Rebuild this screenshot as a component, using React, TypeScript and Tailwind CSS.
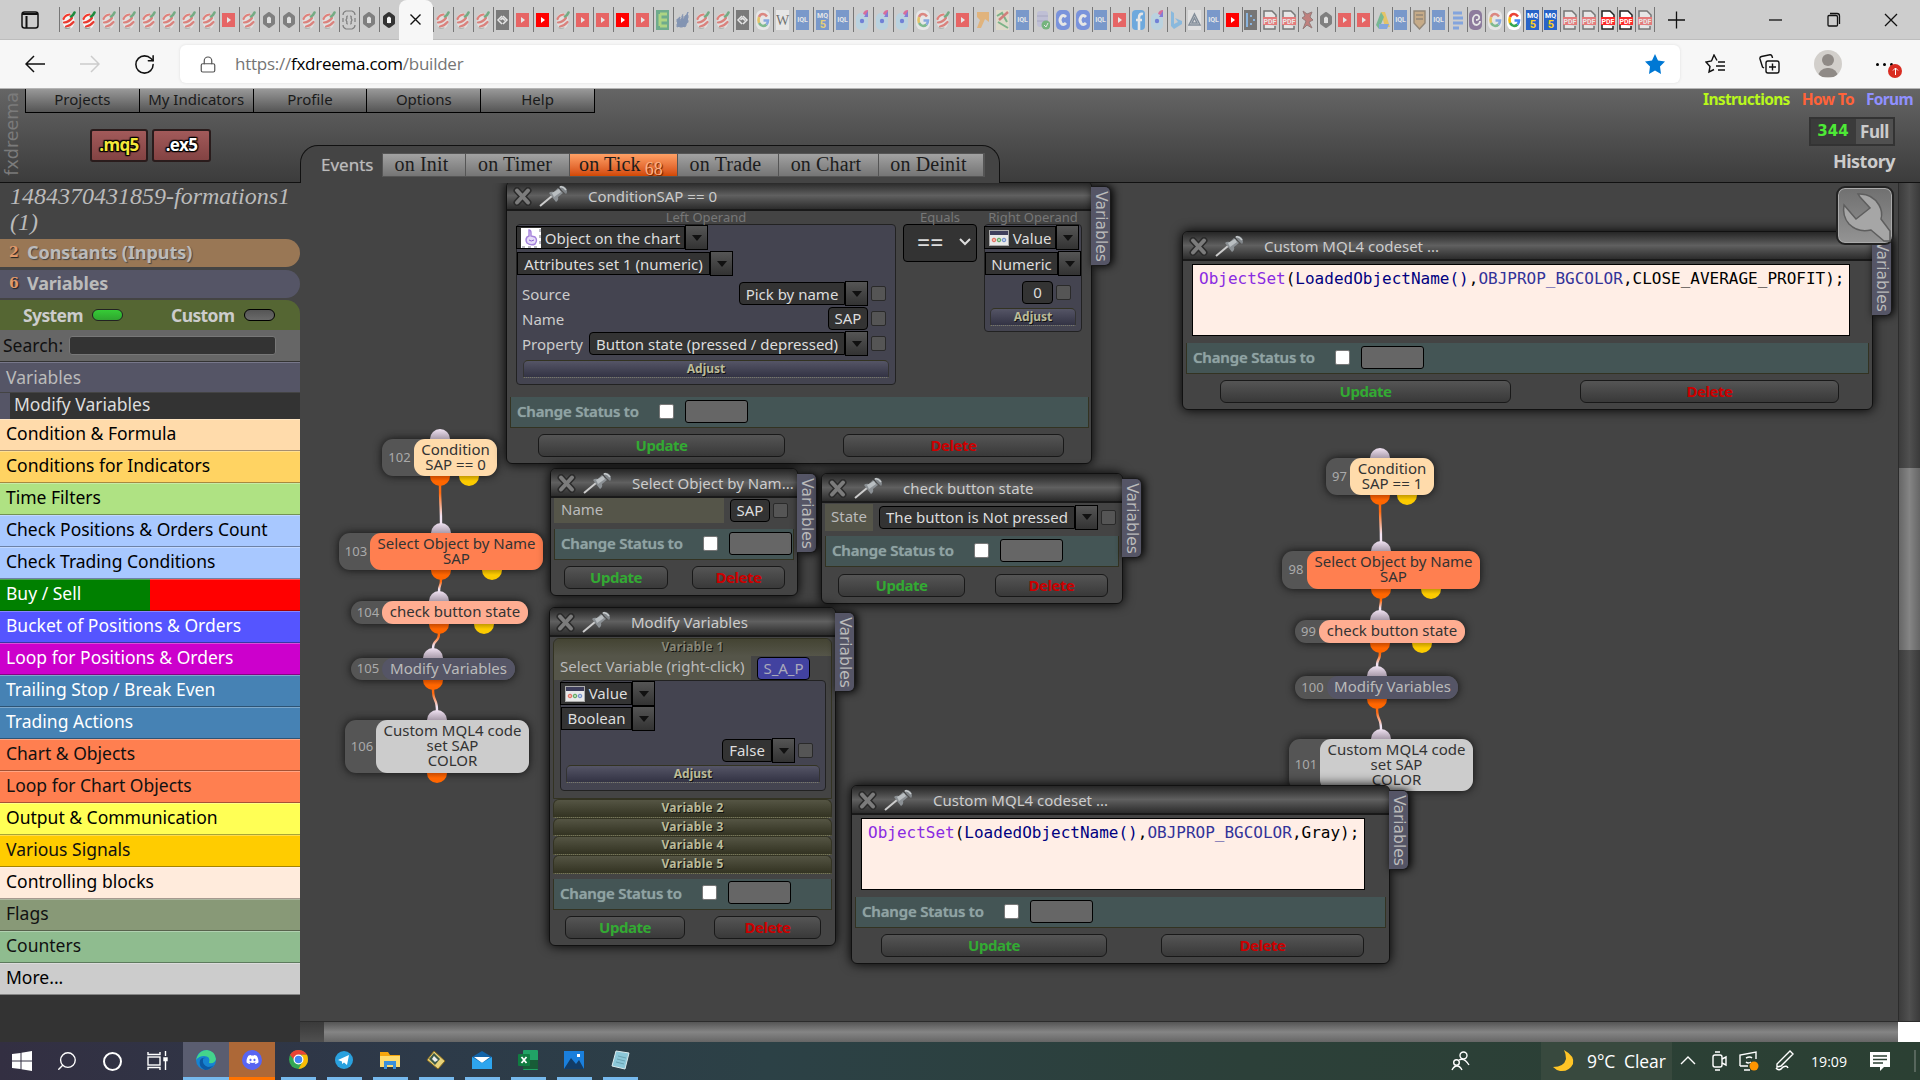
import type { ReactNode } from "react";
import clsx from "clsx";
import { Lock, RotateCw, Search } from "lucide-react";
import { FaDiscord } from "react-icons/fa";

type TabIcon = { kind: string; on?: boolean };

function parseTabs(list: string): TabIcon[] {
  return list.split(" ").map((item) => ({ kind: item.replace("!", ""), on: item.endsWith("!") }));
}

const tabsBefore = parseTabs("fx! fx! fx fx fx fx fx fx yt fx hex hex fx fx brace hex hex!");
const tabsAfter = parseTabs(
  "fx fx fx code yt yt! fx yt yt yt! yt e wave fx fx code g w mql mq5 mql dots dots dots g fx yt arrow map mql db c",
);
const tabsNarrow = parseTabs(
  "c mql yt fb dots bing tri mql yt! chart pdf pdf devil hex yt yt drive mql shield mql doc swirl g g! mq5! mq5! pdf pdf pdf! pdf! pdf",
);

const categories = [
  { label: "Condition & Formula", style: "bg-[#ffdbab] text-black" },
  { label: "Conditions for Indicators", style: "bg-[#ffd362] text-black" },
  { label: "Time Filters", style: "bg-[#afe283] text-black" },
  { label: "Check Positions & Orders Count", style: "bg-[#a8c8ff] text-black" },
  { label: "Check Trading Conditions", style: "bg-[#a8c8ff] text-black" },
  { label: "Buy / Sell", style: "bg-[linear-gradient(90deg,#008000_50%,#ff0000_50%)] text-white" },
  { label: "Bucket of Positions & Orders", style: "bg-[#5555ff] text-white" },
  { label: "Loop for Positions & Orders", style: "bg-[#cc00cc] text-white" },
  { label: "Trailing Stop / Break Even", style: "bg-[#4682b4] text-white" },
  { label: "Trading Actions", style: "bg-[#4682b4] text-white" },
  { label: "Chart & Objects", style: "bg-[#ff7f50] text-[#111]" },
  { label: "Loop for Chart Objects", style: "bg-[#ff7f50] text-[#111]" },
  { label: "Output & Communication", style: "bg-[#ffff55] text-black" },
  { label: "Various Signals", style: "bg-[#ffcc00] text-[#111]" },
  { label: "Controlling blocks", style: "bg-[#ffebdc] text-black" },
  { label: "Flags", style: "bg-[#889977] text-[#111]" },
  { label: "Counters", style: "bg-[#8fbc8f] text-[#111]" },
  { label: "More...", style: "bg-[#cccccc] text-black" },
];

function Favicon({ kind }: { kind: string }) {
  switch (kind) {
    case "fx":
      return (
        <>
          <ellipse cx="6.500" cy="11" rx="6" ry="8" fill="#f7f3f1" />
          <g fill="none" strokeLinecap="round" strokeWidth="2.2">
            <path d="M1.500 9Q3 5 7.500 4.500" stroke="#f2382c" />
            <path d="M2 12.500Q7 12 10 8" stroke="#e8392f" />
            <path d="M4 16.500Q8 16 11.500 12" stroke="#e8392f" />
            <path d="M9 6.500Q11.500 5 12.500 2.500" stroke="#1e8a3c" strokeWidth="2.600" />
            <path d="M3 18Q5 19 8 18" stroke="#7d8a80" strokeWidth="1" />
          </g>
        </>
      );
    case "yt":
      return (
        <>
          <rect y="3" width="13" height="14" fill="#f00" />
          <path d="M5 7 L9 10 L5 13Z" fill="#fff" />
        </>
      );
    case "hex":
      return <path d="M7 4 L11 7 V13 L7 16 L3 13 V7Z" fill="#f4f4f4" stroke="#333" strokeWidth="4" strokeLinejoin="round" />;
    case "brace":
      return (
        <g fill="none" stroke="#333" strokeWidth="1.2">
          <path d="M1 5 Q1 2 4 1 H10 Q13 2 13 5 M1 15 Q1 18 4 19 H10 Q13 18 13 15 M1 8V12M13 8V12" />
          <path d="M6 6 Q4 6 5 8 L4 10 L5 12 Q4 14 6 14 M8 6 Q10 6 9 8 L10 10 L9 12 Q10 14 8 14" />
        </g>
      );
    case "code":
      return (
        <>
          <rect width="13" height="20" fill="#2a2a2a" />
          <path d="M6 6 L2 10 L6 14 M7 6 L11 10 L7 14 M4.500 10 L6.500 8 L9 10.500" fill="none" stroke="#fff" strokeWidth="1.500" />
        </>
      );
    case "e":
      return (
        <>
          <rect width="13" height="20" fill="#138a4f" />
          <path d="M4 4H11M4 10H11M4 16H11M4 4V16" stroke="#8fdc3c" strokeWidth="3" fill="none" />
        </>
      );
    case "wave":
      return <path d="M1 17V9L4 7V11L7 4V9L12 2V12L9 17Z" fill="#3c5c99" stroke="#45639a" strokeDasharray="3 2" />;
    case "mql":
    case "mq5":
      return (
        <>
          <rect width="13" height="20" fill="#2864c8" />
          <text x="6.5" y={kind === "mql" ? 12 : 8} textAnchor="middle" fontSize="7" fontWeight="700" fill="#fff" fontFamily="Roboto">
            {kind === "mql" ? "IQL" : "MQ"}
          </text>
          {kind === "mq5" && (
            <text x="7" y="18" textAnchor="middle" fontSize="11" fontWeight="700" fill="#ffd21f" fontFamily="Roboto">
              5
            </text>
          )}
        </>
      );
    case "g":
      return (
        <>
          <rect width="14" height="20" rx="6" fill="#fff" />
          <g fill="none" strokeWidth="2.6">
            <path d="M11 6.5 Q9 4 7 4 Q4 4 3 7" stroke="#ea4335" />
            <path d="M3 7 Q2 10 3 13" stroke="#fbbc05" />
            <path d="M3 13 Q5 16 7 16 Q9 16 10.5 14.5" stroke="#34a853" />
            <path d="M10.5 14.5 Q12 13 12 10.5 H7.5" stroke="#4285f4" />
          </g>
        </>
      );
    case "w":
      return (
        <>
          <rect width="13" height="20" fill="#fff" />
          <text x="6.5" y="15" textAnchor="middle" fontSize="14" fill="#111" fontFamily="Liberation Serif">
            W
          </text>
        </>
      );
    case "dots":
      return (
        <>
          <rect y="3" width="12" height="17" rx="5" fill="#a9d8f2" />
          <path d="M7 4 Q8 0 12 0 V6Z" fill="#e3106a" />
          <path d="M12 1 V7 L8 7Z" fill="#3c2ee0" />
          <circle cx="6" cy="11" r="2.2" fill="#1838e0" />
        </>
      );
    case "arrow":
      return <path d="M1 2 H13 V12 L9 9 L5 18 H1 L4 10 L1 7Z" fill="#f39a2d" />;
    case "map":
      return (
        <>
          <rect width="13" height="20" fill="#efe7c8" />
          <path d="M1 6 L6 3 L11 12 M2 12 L12 18" stroke="#2c9a45" strokeWidth="2" fill="none" />
          <path d="M12 2 L3 10" stroke="#d3362c" strokeWidth="2.5" />
        </>
      );
    case "db":
      return (
        <>
          <rect x="1" y="1" width="11" height="16" rx="3" fill="#b3b3dd" />
          <path d="M1 6H12M1 11H12" stroke="#8080b5" />
          <circle cx="10" cy="15" r="4.5" fill="#1f9d2f" />
          <path d="M8 15 L10 17 L12 13" stroke="#fff" fill="none" />
        </>
      );
    case "c":
      return (
        <>
          <rect width="14" height="20" rx="5" fill="#2a5bea" />
          <path d="M10 7 Q7 4 5 7 Q3 10 5 13 Q7 16 10 13" stroke="#fff" strokeWidth="3" fill="none" />
        </>
      );
    case "fb":
      return (
        <>
          <rect width="13" height="20" rx="4" fill="#1186ee" />
          <path d="M11 4 Q7 3 7 8 V20 M4 10 H10" stroke="#fff" strokeWidth="2.6" fill="none" />
        </>
      );
    case "bing":
      return <path d="M2 1 L5 3 V14 L9 12 L6 8 L13 11 V14 L5 19 L2 16Z" fill="#4aa7ee" />;
    case "tri":
      return (
        <>
          <rect width="13" height="20" fill="#f2f2f2" />
          <path d="M6.5 4 L12 15 H1Z M6.5 8 L9 13 H4Z" fill="none" stroke="#3b5068" strokeWidth="1.5" />
        </>
      );
    case "chart":
      return (
        <>
          <rect width="13" height="20" fill="#222" />
          <path d="M3 3V17M6 6H8M9 10H11M6 14H8" stroke="#4a9cf0" strokeWidth="2" />
        </>
      );
    case "pdf":
      return (
        <>
          <path d="M1 7V1H9L13 5V7M1 14V19H12V16" stroke="#222" fill="#fff" strokeWidth="1.5" />
          <rect y="7" width="14" height="8" fill="#fb2b2b" />
          <text x="7" y="14" textAnchor="middle" fontSize="7" fontWeight="700" fill="#fff" fontFamily="Roboto">
            PDF
          </text>
        </>
      );
    case "devil":
      return <path d="M2 1 L6 4 L11 2 L9 7 L12 10 L8 12 L11 18 L6 15 L2 19 L5 11 L1 8 L4 6Z" fill="#b7352f" stroke="#5c2d2a" />;
    case "drive":
      return (
        <>
          <path d="M5 2H9L14 17H9Z" fill="#fbbc05" />
          <path d="M5 2L0 15L3 19L8 7Z" fill="#25a55a" />
          <path d="M3 14H13L11 19H3Z" fill="#3f80ee" />
        </>
      );
    case "shield":
      return <path d="M1 1H12V13L6.5 19L1 13Z M3 5H10M3 9H10" fill="#c08a45" stroke="#5b4425" strokeWidth="1.4" />;
    case "doc":
      return <path d="M2 3H11M2 8H12M2 13H12M2 18H8" stroke="#3b7ded" strokeWidth="3" />;
    default:
      return (
        <>
          <rect width="13" height="20" rx="5" fill="#4e2c6e" />
          <path d="M10 6 Q6 3 4 8 Q3 15 8 15 Q11 14 11 11 M10 6 Q11 10 7 10" stroke="#fff" strokeWidth="1.8" fill="none" />
        </>
      );
  }
}

function TabStrip({ tabs, cell }: { tabs: TabIcon[]; cell: string }) {
  return (
    <div className="flex h-[25px]">
      {tabs.map((tab, i) => (
        <div key={i} className={clsx("flex shrink-0 items-center justify-center border-l border-[#777]", cell)}>
          <svg width="14" height="20" viewBox="0 0 14 20" className={tab.on ? "" : "opacity-50"}>
            <Favicon kind={tab.kind} />
          </svg>
        </div>
      ))}
    </div>
  );
}

function BrowserBar() {
  return (
    <div className="h-[89px] bg-[#f7f7f7] font-['Open_Sans',sans-serif]">
      <div className="flex h-10 items-center border-b border-[#bdbdbd] bg-[#cdcdcd]">
        <div className="flex w-[59px] justify-center pl-[1px]">
          <svg width="18" height="18" viewBox="0 0 18 18" fill="none" stroke="#111" strokeWidth="1.5">
            <rect x="1" y="1" width="16" height="16" rx="2.5" />
            <path d="M1 3H17M5.5 5V17" strokeWidth="2" />
          </svg>
        </div>
        <TabStrip tabs={tabsBefore} cell="w-5" />
        <div className="flex h-10 w-[34px] items-center justify-center rounded-t-lg bg-[#f7f7f7]">
          <svg width="11" height="11" viewBox="0 0 11 11" stroke="#111" strokeWidth="1.4">
            <path d="M0.5 0.5L10.5 10.5M10.5 0.5L0.5 10.5" />
          </svg>
        </div>
        <TabStrip tabs={tabsAfter} cell="w-5" />
        <TabStrip tabs={tabsNarrow} cell="w-[18.75px]" />
        <div className="flex flex-1 items-center border-[#777]">
          <span className="h-[25px] w-px bg-[#777]" />
          <svg width="265" height="20" viewBox="0 0 265 20" fill="none" stroke="#111" strokeWidth="1.3">
            <path d="M13 10H30M21.500 1.500V18.500" />
            <path d="M114 10H127" />
            <path d="M173 6.500Q173 5.500 174 5.500H181Q182.500 5.500 182.500 7V15Q182.500 16 181.500 16H174Q173 16 173 15ZM175 3.500H182Q184.500 3.500 184.500 6V14" />
            <path d="M230 4L242 16M242 4L230 16" />
          </svg>
        </div>
      </div>
      <div className="flex h-[49px] items-center border-b border-[#b5b5b5]">
        <svg width="20" height="18" viewBox="0 0 20 18" className="ml-[25px]" fill="none" stroke="#111" strokeWidth="1.5">
          <path d="M20 9H1M9 1L1 9L9 17" />
        </svg>
        <svg width="20" height="18" viewBox="0 0 20 18" className="ml-[35px]" fill="none" stroke="#ccc" strokeWidth="1.5">
          <path d="M0 9H19M11 1L19 9L11 17" />
        </svg>
        <RotateCw className="ml-[33px] h-[23px] w-[23px] text-[#111]" strokeWidth={1.6} />
        <div className="ml-[24px] flex h-[38px] w-[1500px] items-center rounded-md bg-white pl-[19px] pr-[15px] shadow-[0_0_3px_#ddd]">
          <Lock className="h-[19px] w-[18px] text-[#555]" strokeWidth={1.6} />
          <span className="ml-[18px] flex-1 text-[17px] tracking-[-0.25px] text-[#757575]">
            https://<span className="text-black">fxdreema.com</span>/builder
          </span>
          <svg width="20" height="20" viewBox="0 0 20 20" fill="#0078d4">
            <path d="M10 0L13 6.500L20 7.500L15 12.500L16 20L10 16.500L4 20L5 12.500L0 7.500L7 6.500Z" />
          </svg>
        </div>
        <svg width="20" height="20" viewBox="0 0 20 20" className="ml-[25px]" fill="none" stroke="#111" strokeWidth="1.4">
          <path d="M12 6.500L9 1L6.500 7L1 8L5 12.500L4 18L9 15.500M13 8H20M11 12H20M13 16H20" />
        </svg>
        <svg width="21" height="20" viewBox="0 0 21 20" className="ml-[34px]" fill="none" stroke="#111" strokeWidth="1.4">
          <rect x="7" y="7" width="13" height="12" rx="2" />
          <path d="M13.500 9.500V16.500M10 13H17M5 14L3.500 13L1 5Q0.500 3 2.500 2.500L11 0.800Q13 0.500 13.500 4" />
        </svg>
        <div className="ml-[34px] flex h-7 w-7 flex-col items-center overflow-hidden rounded-full bg-[#d2cfcb] pt-1">
          <span className="h-3 w-3 rounded-full bg-[#8f8a86]" />
          <span className="mt-0.5 h-[9px] w-[20px] rounded-t-full rounded-b-md bg-[#8f8a86]" />
        </div>
        <div className="relative ml-[34px] flex gap-[4px]">
          <span className="h-[3px] w-[3px] rounded-full bg-black" />
          <span className="h-[3px] w-[3px] rounded-full bg-black" />
          <span className="h-[3px] w-[3px] rounded-full bg-black" />
          <span className="absolute left-[12px] top-[1px] flex h-[14px] w-[14px] items-center justify-center rounded-full bg-[#d92c21]">
            <svg width="7" height="8" viewBox="0 0 7 8" stroke="#fff" fill="none">
              <path d="M3.500 8V1M1 3.500L3.500 1L6 3.500" />
            </svg>
          </span>
        </div>
      </div>
    </div>
  );
}

const events = [
  { label: "on Init", width: "w-[83px]" },
  { label: "on Timer", width: "w-[104px]" },
  { label: "on Tick", width: "w-[108px]", count: 68 },
  { label: "on Trade", width: "w-[101px]" },
  { label: "on Chart", width: "w-[100px]" },
  { label: "on Deinit", width: "w-[105px]" },
];

const compileButton =
  "h-[33px] rounded-[3px] border-2 border-[#2a1c1c] bg-linear-to-b from-[#a25a5a] to-[#834343] text-center text-[17px] font-bold leading-[28px] tracking-[-0.6px] [text-shadow:0_0_2px_#000,0_0_2px_#000,1px_1px_1px_#000,-1px_-1px_1px_#000,1px_-1px_1px_#000,-1px_1px_1px_#000]";

function AppHeader() {
  return (
    <header className="flex h-[94px] justify-between border-b border-[#111] bg-linear-to-b from-[#656565] to-[#3c3c3c]">
      <div className="flex">
        <div className="flex w-[25px] items-center justify-center pb-[4px]">
          <span className="rotate-180 font-['DejaVu_Sans',sans-serif] text-[17.5px] leading-none text-[#7b7b7b] [writing-mode:vertical-rl]">
            fxdreema
          </span>
        </div>
        <div className="w-[275px]">
          <nav className="flex h-[24px] w-[570px] border-b border-l border-black">
            {["Projects", "My Indicators", "Profile", "Options", "Help"].map((item) => (
              <span
                key={item}
                className="flex-1 border-r border-black bg-linear-to-b from-[#999] to-[#555] text-center text-[15px] leading-[21px] text-[#1a1a1a]"
              >
                {item}
              </span>
            ))}
          </nav>
          <div className="ml-[65px] mt-4 flex gap-1">
            <span className={clsx(compileButton, "w-[58px] text-[#f5e93a]")}>.mq5</span>
            <span className={clsx(compileButton, "w-[59px] text-white")}>.ex5</span>
          </div>
        </div>
        <div className="mt-[56px] flex h-[38px] w-[700px] items-start rounded-t-[18px] border border-b-0 border-[#111] bg-[#444] pl-[20px] pt-[7px]">
          <span className="w-[61px] text-[17px] leading-[23px] text-[#bbb] [text-shadow:0_0_1px_#888]">Events</span>
          <div className="flex h-6 border border-[#555]">
            {events.map((event) => (
              <span
                key={event.label}
                className={clsx(
                  "border-r border-[#555] pr-[5px] text-center font-['Liberation_Serif',serif] text-[20px] leading-[20px] tracking-[0.15px] text-[#1c1c1c]",
                  event.width,
                  event.count ? "bg-linear-to-b from-[#ffa064] to-[#d24800]" : "bg-linear-to-b from-[#a2a2a2] to-[#757575]",
                )}
              >
                {event.label}
                {event.count && (
                  <sub className="bottom-[-4px] ml-1 text-[18px] text-[#ffb184] [text-shadow:1px_1px_1px_#5a2000]">{event.count}</sub>
                )}
              </span>
            ))}
          </div>
        </div>
      </div>
      <div className="flex flex-col items-end font-bold">
        <div className="mr-[7px] flex gap-[12px] text-[15.5px] leading-[20px] tracking-[-0.65px]">
          <span className="text-[#b8f71c]">Instructions</span>
          <span className="text-[#ff6339]">How To</span>
          <span className="text-[#9090ff]">Forum</span>
        </div>
        <div className="mr-[25px] mt-[8px] flex h-[29px] w-[86px] items-center border-2 border-[#333] bg-[#505050]">
          <span className="flex h-full w-[45px] items-center justify-center bg-[#3b3b3b] pr-px font-['DejaVu_Sans',sans-serif] text-[15px] font-bold text-[#4dea36]">
            344
          </span>
          <span className="flex-1 text-center text-[17px] leading-[22px] tracking-[-0.4px] text-[#ccc]">Full</span>
        </div>
        <span className="mr-[25px] mt-[3px] text-[18px] leading-[24px] tracking-[-0.5px] text-[#ccc]">History</span>
      </div>
    </header>
  );
}

function Sidebar() {
  return (
    <aside className="flex w-[300px] shrink-0 flex-col bg-[#333]">
      <div className="flex flex-col bg-[#444]">
        <p className="h-[56px] pl-[10px] font-['Liberation_Serif',serif] text-[24px] italic leading-[26px] text-[#bbb]">
          1484370431859-formations1
          <br />
          (1)
        </p>
        <div className="flex h-[28px] items-center rounded-r-[14px] bg-[#997755] pb-[2px] pl-[9px] text-[18px] font-bold text-[#bbb]">
          <span className="w-[18px] font-['DejaVu_Serif',serif] text-[14px] text-[#e0996a] [text-shadow:1px_1px_1px_#222]">2</span>
          <span className="tracking-[-0.05px] [text-shadow:1px_1px_1px_#444]">Constants (Inputs)</span>
        </div>
        <div className="mt-[3px] flex h-[28px] items-center rounded-r-[14px] bg-[#555566] pb-[2px] pl-[9px] text-[18px] font-bold text-[#bbb]">
          <span className="w-[18px] font-['DejaVu_Serif',serif] text-[14px] text-[#e0996a] [text-shadow:1px_1px_1px_#222]">6</span>
          <span className="tracking-[-0.2px]">Variables</span>
        </div>
        <div className="mt-[2px] flex h-[30px] items-center rounded-tr-[14px] bg-[#556633] pl-[23px] text-[17.5px] font-bold tracking-[-0.6px] text-[#ccc]">
          <span className="w-[69px]">System</span>
          <span className="h-3 w-[31px] rounded-full border border-[#222] bg-linear-to-b from-[#36cc36] to-[#2fa52f]" />
          <span className="ml-[48px] w-[73px]">Custom</span>
          <span className="h-3 w-[31px] rounded-full border border-black bg-linear-to-b from-[#555] to-[#6a6a6a]" />
        </div>
      </div>
      <div className="flex h-[32px] items-center gap-[5px] border-b border-[#333] bg-[#666] pb-px pl-[3px] text-[17.5px] text-[#111]">
        <span className="w-[61px]">Search:</span>
        <span className="h-[19px] w-[207px] rounded-[3px] border border-[#777] bg-[#333]" />
      </div>
      <div className="h-[31px] border-b border-t border-b-[#444] border-t-[#77778a] bg-[#555566] pl-[6px] text-[17.5px] leading-[28px] text-[#bbb]">
        Variables
      </div>
      <div className="h-[26px] border-l-[10px] border-[#555566] bg-[#333] pl-[4px] text-[17.5px] leading-[22px] text-[#ddd]">
        Modify Variables
      </div>
      {categories.map((category) => (
        <div
          key={category.label}
          className={clsx(
            "h-8 border-b border-black/35 pl-[6px] text-[17.5px] leading-[28px] shadow-[inset_0_1px_0_rgba(255,255,255,0.3)]",
            category.style,
          )}
        >
          {category.label}
        </div>
      ))}
    </aside>
  );
}

type WindowProps = {
  title: string;
  place: string;
  children: ReactNode;
};

function BlockWindow({ title, place, children }: WindowProps) {
  return (
    <section className={clsx("absolute rounded-[6px] border border-[#111] bg-[#444] shadow-[0_0_12px_#000]", place)}>
      <header className="flex h-[29px] items-center rounded-t-[5px] border-b-2 border-[#191919] bg-linear-to-b from-[#262626] via-[#606060] to-[#2c2c2c] pl-[6px] pt-px">
        <svg width="19" height="19" viewBox="0 0 19 19" fill="none" strokeLinecap="round">
          <path d="M4 3.500L15 15.500M15 3.500L4 15.500" stroke="#2b2b2b" strokeWidth="7" />
          <path d="M4 3.500L15 15.500M15 3.500L4 15.500" stroke="#7c7c7c" strokeWidth="4" />
        </svg>
        <svg width="29" height="22" viewBox="0 0 29 22" className="ml-[7px]">
          <path d="M1 21L13 11" stroke="#ccc" strokeWidth="2" />
          <path d="M10 8Q12 6 15 7L19 3L24 8L19 12Q20 15 17 17Z" fill="#8b9094" />
          <path d="M13 8L20 4L22 7L15 12Z" fill="#b9bec1" />
          <path d="M20 2Q23 -1 27 3Q29 7 27 9Q24 7 20 2Z" fill="#81868a" />
          <path d="M21 2Q24 1 27 5" stroke="#c8ccce" fill="none" strokeWidth="1.5" />
        </svg>
        <h2 className="ml-[20px] flex-1 whitespace-nowrap text-[15px] leading-[20px] text-[#ccc]">{title}</h2>
      </header>
      {children}
      <span className="absolute left-full top-[4px] flex h-[80px] w-[20px] items-center justify-center rounded-r-[6px] border border-l-0 border-[#1a1a1a] bg-[#555566] font-['DejaVu_Sans',sans-serif] text-[15.5px] leading-none text-[#bbb] shadow-[2px_0_8px_#000] [writing-mode:vertical-rl]">
        Variables
      </span>
    </section>
  );
}

function StatusRow({ place }: { place: string }) {
  return (
    <div className={clsx("flex h-[31px] items-center border border-t-0 border-[#333322] bg-[#445555] pb-[2px] pl-[6px]", place)}>
      <span className="w-[142px] whitespace-nowrap text-[15px] font-semibold tracking-[-0.2px] text-[#8fa3a3] [text-shadow:0_0_1px_#7d9090]">
        Change Status to
      </span>
      <span className="h-[15px] w-[15px] shrink-0 rounded-[2px] border border-[#777] bg-white" />
      <span className="ml-[11px] h-[23px] w-[63px] shrink-0 rounded-[3px] border border-black bg-[#666]" />
    </div>
  );
}

function Buttons({ place, update, remove }: { place: string; update: string; remove: string }) {
  const base =
    "h-[23px] rounded-[6px] border-[1.5px] border-[#191919] bg-linear-to-b from-[#555] to-[#393939] text-center text-[15px] font-bold leading-[20px] tracking-[-0.5px]";
  return (
    <div className={clsx("flex", place)}>
      <span className={clsx(base, "text-[#33aa33]", update)}>Update</span>
      <span className={clsx(base, "text-[#cc0000]", remove)}>Delete</span>
    </div>
  );
}

function Select({ label, width, icon, square }: { label: string; width: string; icon?: "value" | "object"; square?: boolean }) {
  return (
    <span className={clsx("flex h-[25px] items-center", width)}>
      <span
        className={clsx(
          "flex h-[23px] flex-1 items-center justify-center gap-[4px] whitespace-nowrap border border-black bg-[#333] text-[15px] text-[#ddd]",
          !square && "rounded-l-[4px]",
        )}
      >
        {icon === "value" && (
          <svg width="20" height="16" viewBox="0 0 20 16">
            <rect x="0.500" y="0.500" width="19" height="15" fill="#e8e8e8" stroke="#aaa" />
            <rect x="1" y="1" width="18" height="4" fill="#3e3e5c" />
            <circle cx="5" cy="10" r="1.800" fill="#f4b0a4" stroke="#e06a5a" />
            <circle cx="10" cy="10" r="1.800" fill="#b4d8b4" stroke="#5aa45a" />
            <circle cx="15" cy="10" r="1.800" fill="#bccbe8" stroke="#6a8ac8" />
          </svg>
        )}
        {icon === "object" && (
          <svg width="20" height="20" viewBox="0 0 20 20">
            <rect width="20" height="20" fill="#fff" />
            <path d="M8 2Q10 2 10 5V8L14 9Q17 12 14 16Q10 18 6 15Q4 12 6 9L8 8Z" fill="#e6dcf8" stroke="#a583dc" strokeWidth="1.4" />
            <path d="M8 12Q10 14 13 12" stroke="#8a5ed0" fill="none" />
            <path d="M1 19H19M19 1V19" stroke="#778" strokeDasharray="3 3" />
          </svg>
        )}
        {label}
      </span>
      <span className="flex h-[25px] w-[23px] items-center justify-center border border-black bg-linear-to-b from-[#555] to-[#333]">
        <span className="border-x-[5px] border-t-[6px] border-x-transparent border-t-[#111]" />
      </span>
    </span>
  );
}

function Input({ value, width }: { value: string; width: string }) {
  return (
    <span className={clsx("h-[23px] rounded-[4px] border border-black bg-[#333] text-center text-[15px] leading-[20px] text-[#ddd]", width)}>
      {value}
    </span>
  );
}

function Check() {
  return <span className="ml-[3px] h-[15px] w-[15px] shrink-0 rounded-[2px] border border-[#2a2a2a] bg-[#555]" />;
}

function Adjust({ place }: { place: string }) {
  return (
    <div
      className={clsx(
        "h-[18px] rounded-t-[5px] border-x border-b border-t border-b-[#777766] border-x-[#333] border-t-[#333322] bg-linear-to-b from-[#555566] to-[#333344] text-center text-[12px] font-bold leading-[16px] text-[#bbbb99] [border-bottom-style:dotted] [text-shadow:1px_1px_0_#111]",
        place,
      )}
    >
      Adjust
    </div>
  );
}

function ConditionWindow() {
  return (
    <BlockWindow title="ConditionSAP == 0" place="left-[206px] top-[-2px] h-[283px] w-[586px]">
      <div className="flex gap-[7px] pl-[9px] text-center text-[13px] leading-[12px] text-[#777]">
        <div className="w-[380px]">
          Left Operand
          <div className="mt-px h-[161px] rounded-[4px] border border-[#222] bg-[#444450] text-left text-[15px] text-[#ccc]">
            <Select label="Object on the chart" width="-ml-px w-[192px]" icon="object" square />
            <div className="mt-px">
              <Select label="Attributes set 1 (numeric)" width="w-[216px]" square />
            </div>
            <div className="mt-[5px] flex h-[25px] items-center pl-[5px] pr-[9px]">
              <span className="flex-1">Source</span>
              <Select label="Pick by name" width="w-[129px]" />
              <Check />
            </div>
            <div className="flex h-[25px] items-center pl-[5px] pr-[9px]">
              <span className="flex-1">Name</span>
              <Input value="SAP" width="w-[40px]" />
              <Check />
            </div>
            <div className="flex h-[25px] items-center pl-[5px] pr-[9px]">
              <span className="flex-1">Property</span>
              <Select label="Button state (pressed / depressed)" width="w-[279px]" />
              <Check />
            </div>
            <Adjust place="mx-[6px] mt-[4px]" />
          </div>
        </div>
        <div className="w-[74px]">
          Equals
          <div className="mt-px flex h-[38px] items-center justify-between rounded-[4px] border border-black bg-[#333] pl-[13px] pr-[5px] pb-[2px] text-[23px] text-[#ddd]">
            ==
            <svg width="12" height="8" viewBox="0 0 12 8" fill="none" stroke="#ddd" strokeWidth="2">
              <path d="M1 1L6 6L11 1" />
            </svg>
          </div>
        </div>
        <div className="w-[98px]">
          Right Operand
          <div className="mt-px h-[108px] rounded-[4px] border border-[#222] bg-[#444450] text-[15px] text-[#ccc]">
            <Select label="Value" width="-ml-px w-[95px]" icon="value" square />
            <div className="mt-px">
              <Select label="Numeric" width="w-[96px]" square />
            </div>
            <div className="mt-[4px] flex h-[25px] items-center pl-[37px]">
              <Input value="0" width="w-[31px]" />
              <Check />
            </div>
            <Adjust place="mx-[5px] mt-[3px]" />
          </div>
        </div>
      </div>
      <StatusRow place="ml-[3px] mr-[2px] mt-[12px]" />
      <Buttons place="mt-[6px] pl-[31px]" update="w-[247px]" remove="ml-[58px] w-[221px]" />
    </BlockWindow>
  );
}

function CodeBox({ place, value }: { place: string; value: string }) {
  return (
    <div
      className={clsx(
        "h-[72px] whitespace-nowrap border border-black bg-[#ffeee6] pl-[6px] pt-[2px] font-['DejaVu_Sans_Mono',monospace] text-[16px] leading-[24px] text-[#000080]",
        place,
      )}
    >
      <span className="text-[#8a2be2]">ObjectSet</span>
      <span className="text-black">(</span>LoadedObjectName()<span className="text-black">,</span>
      <span className="text-[#333399]">OBJPROP_BGCOLOR</span>
      <span className="text-black">,{value});</span>
    </div>
  );
}

function ModifyWindow() {
  const row =
    "h-[18.7px] rounded-t-[6px] border border-b-[#777755] border-t-[#333322] border-x-[#333322] bg-linear-to-b from-[#555544] to-[#333322] text-center text-[12px] font-bold leading-[16px] tracking-[0.3px] text-[#bbbb99] [border-bottom-style:dotted] [text-shadow:1px_1px_0_#111]";
  return (
    <BlockWindow title="Modify Variables" place="left-[249px] top-[424px] h-[339px] w-[287px]">
      <div className="mx-[3px] mt-px h-[161px] rounded-t-[6px] border border-[#333322]">
        <div className="h-[17px] rounded-t-[6px] bg-linear-to-b from-[#444433] to-[#555549] text-center text-[12px] font-bold leading-[15px] tracking-[0.3px] text-[#888877] [text-shadow:1px_1px_0_#111]">
          Variable 1
        </div>
        <div className="flex h-[24px] items-center">
          <span className="h-[24px] w-[197px] bg-[#555549] pl-[6px] text-[15px] leading-[21px] text-[#bbb]">Select Variable (right-click)</span>
          <span className="ml-[6px] h-[23px] w-[53px] rounded-[4px] border border-black bg-[#4242a0] text-center text-[15px] leading-[20px] text-[#aab]">
            S_A_P
          </span>
        </div>
        <div className="ml-[6px] h-[111px] w-[266px] rounded-[4px] border border-[#222] bg-[#444450]">
          <Select label="Value" width="-ml-px w-[95px]" icon="value" square />
          <Select label="Boolean" width="w-[94px]" square />
          <div className="mt-[7px] flex items-center justify-end pr-[12px]">
            <Select label="False" width="w-[73px]" />
            <Check />
          </div>
          <Adjust place="mx-[5px] mt-[2px]" />
        </div>
      </div>
      <div className="mx-[3px]">
        {[2, 3, 4, 5].map((n) => (
          <div key={n} className={row}>
            Variable {n}
          </div>
        ))}
      </div>
      <StatusRow place="mx-[3px] mt-[5px]" />
      <Buttons place="mt-[6px] pl-[15px]" update="w-[120px]" remove="ml-[29px] w-[107px]" />
    </BlockWindow>
  );
}

type NodeProps = {
  id: number;
  lines: string[];
  place: string;
  idWidth: string;
  color: string;
  port: string;
  elsePort?: string;
};

const nodes: NodeProps[] = [
  { id: 102, lines: ["Condition", "SAP == 0"], place: "left-[82px] top-[256px] h-[37px] w-[115px]", idWidth: "w-[32px]", color: "bg-[#ffdbab] text-[#333]", port: "left-[48px]", elsePort: "left-[77px]" },
  { id: 103, lines: ["Select Object by Name", "SAP"], place: "left-[39px] top-[350px] h-[37px] w-[204px]", idWidth: "w-[31px]", color: "bg-[#ff7f50] text-[#333]", port: "left-[92px]", elsePort: "left-[143px]" },
  { id: 104, lines: ["check button state"], place: "left-[51px] top-[418px] h-[23px] w-[177px]", idWidth: "w-[31px]", color: "bg-[#ffad91] text-[#333]", port: "left-[78px]", elsePort: "left-[123px]" },
  { id: 105, lines: ["Modify Variables"], place: "left-[51px] top-[475px] h-[22px] w-[164px]", idWidth: "w-[31px]", color: "bg-[#555566] text-[#bbb]", port: "left-[72px]" },
  { id: 106, lines: ["Custom MQL4 code", "set SAP", "COLOR"], place: "left-[45px] top-[537px] h-[53px] w-[184px]", idWidth: "w-[31px]", color: "bg-[#ccc] text-[#333]", port: "left-[82px]" },
  { id: 97, lines: ["Condition", "SAP == 1"], place: "left-[1026px] top-[275px] h-[37px] w-[108px]", idWidth: "w-[24px]", color: "bg-[#ffdbab] text-[#333]", port: "left-[44px]", elsePort: "left-[71px]" },
  { id: 98, lines: ["Select Object by Name", "SAP"], place: "left-[982px] top-[368px] h-[38px] w-[198px]", idWidth: "w-[25px]", color: "bg-[#ff7f50] text-[#333]", port: "left-[89px]", elsePort: "left-[139px]" },
  { id: 99, lines: ["check button state"], place: "left-[995px] top-[437px] h-[23px] w-[170px]", idWidth: "w-[24px]", color: "bg-[#ffad91] text-[#333]", port: "left-[75px]", elsePort: "left-[117px]" },
  { id: 100, lines: ["Modify Variables"], place: "left-[995px] top-[493px] h-[23px] w-[163px]", idWidth: "w-[32px]", color: "bg-[#555566] text-[#bbb]", port: "left-[72px]" },
  { id: 101, lines: ["Custom MQL4 code", "set SAP", "COLOR"], place: "left-[989px] top-[556px] h-[52px] w-[184px]", idWidth: "w-[31px]", color: "bg-[#ccc] text-[#333]", port: "left-[82px]" },
];

function FlowNode({ id, lines, place, idWidth, color, port, elsePort }: NodeProps) {
  return (
    <div className={clsx("absolute flex items-center rounded-[11px] bg-[#555] shadow-[0_0_9px_#111]", place)}>
      <span className={clsx("absolute bottom-full h-[10px] w-[20px] rounded-t-full bg-linear-to-b from-[#f0e2f2] to-[#a99cab]", port)} />
      <span className={clsx("absolute top-full h-[10px] w-[20px] rounded-b-full bg-linear-to-b from-[#c84a00] to-[#ff6600] to-50%", port)} />
      {elsePort && (
        <span className={clsx("absolute top-full h-[10px] w-[20px] rounded-b-full bg-linear-to-b from-[#c49a00] to-[#fccb00] to-50%", elsePort)} />
      )}
      <span className={clsx("shrink-0 pl-[3px] text-center text-[13px] text-[#aaa]", idWidth)}>{id}</span>
      <span
        className={clsx(
          "flex h-full flex-1 flex-col justify-center whitespace-nowrap rounded-[11px] pb-[2px] text-center text-[15px] leading-[15px]",
          color,
        )}
      >
        {lines.map((line) => (
          <span key={line}>{line}</span>
        ))}
      </span>
    </div>
  );
}

const links = [
  [140, 302, 141, 341],
  [141, 396, 139, 409],
  [139, 450, 133, 466],
  [133, 506, 137, 528],
  [1080, 321, 1081, 359],
  [1081, 415, 1080, 428],
  [1080, 469, 1077, 484],
  [1077, 525, 1081, 547],
];

function Canvas() {
  return (
    <div className="relative h-[838px] flex-1 overflow-hidden bg-[#444]">
      <svg className="absolute inset-0" width="1598" height="838" fill="none" strokeWidth="2.4">
        {links.map(([x1, y1, x2, y2], i) => (
          <g key={i}>
            <linearGradient id={`link${i}`} gradientUnits="userSpaceOnUse" x1="0" y1={y1} x2="0" y2={y2}>
              <stop offset="0.2" stopColor="#ff6a10" />
              <stop offset="0.8" stopColor="#f0e2f2" />
            </linearGradient>
            <path d={`M${x1} ${y1}C${x1} ${(y1 + y2) / 2 + 3} ${x2} ${(y1 + y2) / 2 - 3} ${x2} ${y2}`} stroke={`url(#link${i})`} />
          </g>
        ))}
      </svg>
      {nodes.map((node) => (
        <FlowNode key={node.id} {...node} />
      ))}

      <ConditionWindow />

      <BlockWindow title="Select Object by Nam..." place="left-[250px] top-[285px] h-[128px] w-[248px]">
        <div className="flex h-[25px] items-center pl-[3px]">
          <span className="h-[25px] w-[170px] bg-[#555549] pl-[7px] text-[15px] leading-[22px] text-[#bbb]">Name</span>
          <span className="w-[6px]" />
          <Input value="SAP" width="w-[40px]" />
          <Check />
        </div>
        <StatusRow place="ml-[3px] mr-[3px] mt-[6px]" />
        <Buttons place="mt-[6px] pl-[13px]" update="w-[104px]" remove="ml-[24px] w-[93px]" />
      </BlockWindow>

      <BlockWindow title="check button state" place="left-[521px] top-[290px] h-[131px] w-[302px]">
        <div className="flex h-[28px] items-center pl-[3px]">
          <span className="h-[27px] w-[48px] bg-[#555549] pl-[6px] text-[15px] leading-[24px] text-[#bbb]">State</span>
          <span className="w-[6px]" />
          <Select label="The button is Not pressed" width="w-[219px]" />
          <Check />
        </div>
        <StatusRow place="ml-[3px] mr-[3px] mt-[5px]" />
        <Buttons place="mt-[7px] pl-[16px]" update="w-[127px]" remove="ml-[30px] w-[113px]" />
      </BlockWindow>

      <ModifyWindow />

      <BlockWindow title="Custom MQL4 codeset ..." place="left-[551px] top-[602px] h-[179px] w-[539px]">
        <CodeBox place="ml-[9px] mt-[3px] w-[504px]" value="Gray" />
        <StatusRow place="mx-[3px] mt-[7px]" />
        <Buttons place="mt-[6px] pl-[29px]" update="w-[226px]" remove="ml-[54px] w-[203px]" />
      </BlockWindow>

      <BlockWindow title="Custom MQL4 codeset ..." place="left-[882px] top-[48px] h-[179px] w-[691px]">
        <CodeBox place="ml-[9px] mt-[3px] w-[658px]" value="CLOSE_AVERAGE_PROFIT" />
        <StatusRow place="mx-[3px] mt-[7px]" />
        <Buttons place="mt-[6px] pl-[37px]" update="w-[291px]" remove="ml-[69px] w-[259px]" />
      </BlockWindow>

      <button className="absolute left-[1536px] top-[3px] h-[59px] w-[58px] rounded-[9px] border-2 border-[#222] bg-linear-to-b from-[#707070] to-[#949494] shadow-[inset_0_0_0_1px_#aaa]">
        <svg width="54" height="55" viewBox="0 0 54 55">
          <path
            d="M20 6Q34 5 41 17Q45 24 43 31L52 43V53H46L33 42Q20 45 11 36Q4 28 6 17L18 31L32 20L22 9Z"
            fill="#a6a6a6"
            stroke="#5e5e5e"
            strokeWidth="1.5"
          />
        </svg>
      </button>
    </div>
  );
}

function TaskSlot({ children, tone, line }: { children: ReactNode; tone?: string; line?: string }) {
  return (
    <span className={clsx("flex h-[38px] w-[46px] shrink-0 flex-col items-center justify-end", tone)}>
      <span className="flex flex-1 items-center">{children}</span>
      <span className={clsx("h-[3px]", line ?? "w-0")} />
    </span>
  );
}

function Taskbar() {
  const open = "w-[35px] bg-[#76b9ed]";
  return (
    <footer className="flex h-[38px] items-center bg-[linear-gradient(90deg,#332f42_0%,#2d3a49_22%,#2c4146_40%,#2c4039_65%,#2b4033_100%)] font-['Open_Sans',sans-serif] text-white">
      <span className="flex w-[44px] justify-center">
        <svg width="20" height="20" viewBox="0 0 20 20" fill="#fff">
          <path d="M0 3L8.500 2V9.500H0ZM9.500 1.800L20 0V9.500H9.500ZM0 10.500H8.500V18L0 17ZM9.500 10.500H20V20L9.500 18.200Z" />
        </svg>
      </span>
      <span className="flex w-[46px] justify-center">
        <Search className="h-[22px] w-[22px] -scale-x-100" strokeWidth={1.5} />
      </span>
      <span className="flex w-[45px] justify-center">
        <span className="h-[19px] w-[19px] rounded-full border-[2.5px] border-white" />
      </span>
      <span className="flex w-[45px] justify-center">
        <svg width="21" height="20" viewBox="0 0 21 20" fill="none" stroke="#fff" strokeWidth="1.4">
          <path d="M1 1V3.500H13V1M1 19V16.500H13V19M18.500 0V5M18.500 10V19" />
          <rect x="1" y="6" width="12" height="8" />
          <path d="M17 7H20V9.500H17Z" fill="#fff" />
        </svg>
      </span>
      <span className="w-[3px]" />
      <TaskSlot tone="bg-[#5a5d70]" line="w-full bg-[#76b9ed]">
        <svg width="20" height="20" viewBox="0 0 20 20">
          <circle cx="10" cy="10" r="10" fill="#1683d1" />
          <path d="M1 7Q4 0 11 0Q19 1 20 9Q19 14 13 13Q15 6 8 6Q3 6 0 10Z" fill="#44d48c" />
          <path d="M7 9Q6 15 12 17Q16 17 18 15Q14 20 9 20Q2 17 4 10Q6 7 10 8Q7 8 7 9Z" fill="#0c59a4" />
        </svg>
      </TaskSlot>
      <TaskSlot tone="bg-[#ad6837]" line="w-full bg-[#ff7300]">
        <span className="flex h-5 w-5 items-center justify-center rounded-full bg-[#5865f2]">
          <FaDiscord className="h-[13px] w-[13px]" />
        </span>
      </TaskSlot>
      <TaskSlot line={open}>
        <svg width="19" height="19" viewBox="0 0 20 20">
          <circle cx="10" cy="10" r="10" fill="#34a853" />
          <path d="M1 5Q4 0 10 0Q16 0 19 5H10L6 11Z" fill="#ea4335" />
          <path d="M19 5Q22 13 16 18Q13 20 10 20L15 11L13 5Z" fill="#fbbc05" />
          <circle cx="10" cy="10" r="4.600" fill="#4285f4" stroke="#fff" strokeWidth="1.300" />
        </svg>
      </TaskSlot>
      <TaskSlot line={open}>
        <svg width="18" height="18" viewBox="0 0 18 18">
          <circle cx="9" cy="9" r="9" fill="#2aa1de" />
          <path d="M3 9L14 4L12 14L9 11.500L7 13V10.500Z" fill="#fff" />
        </svg>
      </TaskSlot>
      <TaskSlot line={open}>
        <svg width="20" height="18" viewBox="0 0 20 18">
          <path d="M0 1H8L10 4H20V16H0Z" fill="#f6a50c" />
          <path d="M0 5H20V16H0Z" fill="#ffdb6e" />
          <path d="M4 18V10H16V18H13V14H7V18Z" fill="#3c8fdc" />
        </svg>
      </TaskSlot>
      <TaskSlot line={open}>
        <svg width="20" height="20" viewBox="0 0 20 20">
          <path d="M8 1L19 11L12 19L1 10Z" fill="#e8d27a" stroke="#8a6c1c" />
          <path d="M8 3L14 9L9 15L3 9Z" fill="#3d5a4a" />
          <path d="M8 6L12 10L9 12L6 9Z" fill="#eee" />
        </svg>
      </TaskSlot>
      <TaskSlot line={open}>
        <svg width="20" height="20" viewBox="0 0 20 20">
          <path d="M0 7L10 1L20 7V18H0Z" fill="#1464a8" />
          <path d="M2 7H18L10 13Z" fill="#fff" />
          <path d="M0 7L10 13L20 7V19H0Z" fill="#2ea5ee" />
        </svg>
      </TaskSlot>
      <TaskSlot line={open}>
        <svg width="20" height="20" viewBox="0 0 20 20">
          <rect x="5" width="15" height="20" rx="1" fill="#21a366" />
          <path d="M12 10H20V19H5V14Z" fill="#185c37" />
          <rect y="4" width="12" height="12" rx="1" fill="#107c41" />
          <path d="M3.500 7L8.500 13M8.500 7L3.500 13" stroke="#fff" strokeWidth="1.800" />
        </svg>
      </TaskSlot>
      <TaskSlot line={open}>
        <svg width="20" height="18" viewBox="0 0 20 18">
          <rect width="20" height="18" fill="#1a7fdc" />
          <path d="M0 18L7 7L12 13L15 9L20 18Z" fill="#133c66" />
          <rect x="13" y="3" width="3" height="3" fill="#fff" />
        </svg>
      </TaskSlot>
      <TaskSlot line={open}>
        <svg width="19" height="20" viewBox="0 0 19 20">
          <path d="M5 1L18 3L14 19L1 16Z" fill="#8bc7d8" stroke="#dcebee" />
          <path d="M7 6L15 8M6 9L14 11M5 12L13 14" stroke="#6aa3b2" />
        </svg>
      </TaskSlot>
      <span className="flex-1" />
      <svg width="20" height="20" viewBox="0 0 20 20" className="mr-[70px]" fill="none" stroke="#fff" strokeWidth="1.400">
        <circle cx="12.500" cy="4.500" r="3.500" />
        <path d="M8 9Q13 6 18 14" />
        <circle cx="5.500" cy="11.500" r="2.800" />
        <path d="M1 19Q3 15 6 15Q9 15 11 19" />
      </svg>
      <div className="flex h-[38px] w-[131px] items-center bg-[#38493e] pl-[12px] text-[17.5px]">
        <svg width="22" height="22" viewBox="0 0 22 22">
          <path d="M11 0Q22 6 20 14Q16 22 7 21Q3 20 0 17Q11 17 13 9Q13 4 11 0Z" fill="#ffc526" />
        </svg>
        <span className="ml-[12px] whitespace-nowrap tracking-[-0.1px]">9°C&nbsp; Clear</span>
      </div>
      <svg width="236" height="22" viewBox="0 0 236 22" fill="none" stroke="#fff" strokeWidth="1.400" className="ml-[8px] mr-[4px]">
        <path d="M1 14L8 7L15 14" />
        <rect x="33" y="5" width="9" height="12" rx="2" />
        <path d="M42 9L46 7V15L42 13M35 2H40M35 20H40" />
        <path d="M60 16V5L76 2V9M60 16H68M64 20H70M66 8Q70 6 72 8M66 12Q68 14 71 12" />
        <circle cx="74" cy="16" r="4.500" fill="#ff9500" stroke="none" />
        <path d="M97 14L110 1L113 4L101 16L97 17ZM96 18Q99 22 103 17Q107 15 108 18" />
        <text x="131" y="16.500" fill="#fff" stroke="none" fontSize="14.500" textLength="36" lengthAdjust="spacingAndGlyphs">
          19:09
        </text>
        <path d="M190 2H210V17H204L200 21V17H190Z" fill="#fff" stroke="none" />
        <path d="M193 6H207M193 9.500H207M193 13H203" stroke="#2b4033" />
        <path d="M235 0V22" stroke="#6b786f" />
      </svg>
    </footer>
  );
}

export default function App() {
  return (
    <div className="flex h-[1080px] w-[1920px] flex-col overflow-hidden bg-[#444] font-['Noto_Sans',sans-serif]">
      <BrowserBar />
      <AppHeader />
      <main className="flex h-[859px] shrink-0">
        <Sidebar />
        <div className="flex flex-1 flex-col">
          <div className="flex h-[838px]">
            <Canvas />
            <div className="w-[22px] border-l border-[#2c2c2c] bg-linear-to-r from-[#3c3c3c] via-[#505050] to-[#3a3a3a] pt-[285px]">
              <div className="h-[182px] bg-linear-to-r from-[#666] via-[#858585] to-[#666]" />
            </div>
          </div>
          <div className="flex h-[21px] border-t border-[#2c2c2c]">
            <div className="w-[24px] bg-linear-to-b from-[#3a3a3a] to-[#505050]" />
            <div className="flex-1 bg-linear-to-b from-[#555] via-[#858585] to-[#666]" />
            <div className="w-[22px] bg-white" />
          </div>
        </div>
      </main>
      <Taskbar />
    </div>
  );
}
